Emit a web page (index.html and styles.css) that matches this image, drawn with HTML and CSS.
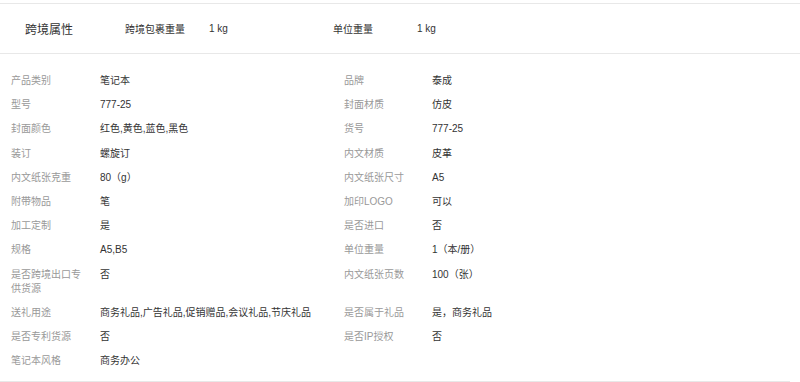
FILE: index.html
```html
<!DOCTYPE html>
<html lang="zh-CN">
<head>
  <meta charset="UTF-8" />
  <meta name="viewport" content="width=device-width, initial-scale=1.0" />
  <title>商品属性</title>
  <link rel="stylesheet" href="styles.css">
</head>
<body>
  <!-- 跨境属性 -->
  <div class="cross-row">
    <div class="cross-title">跨境属性</div>
    <div class="cross-label">跨境包裹重量</div>
    <div class="cross-value">1 kg</div>
    <div class="cross-label">单位重量</div>
    <div class="cross-value">1 kg</div>
  </div>

  <!-- 产品属性 -->
  <div class="attr-grid">
    <div class="attr-name">产品类别</div><div class="attr-value">笔记本</div>
    <div class="attr-name">品牌</div><div class="attr-value">泰成</div>

    <div class="attr-name">型号</div><div class="attr-value">777-25</div>
    <div class="attr-name">封面材质</div><div class="attr-value">仿皮</div>

    <div class="attr-name">封面颜色</div><div class="attr-value">红色,黄色,蓝色,黑色</div>
    <div class="attr-name">货号</div><div class="attr-value">777-25</div>

    <div class="attr-name">装订</div><div class="attr-value">螺旋订</div>
    <div class="attr-name">内文材质</div><div class="attr-value">皮革</div>

    <div class="attr-name">内文纸张克重</div><div class="attr-value">80（g）</div>
    <div class="attr-name">内文纸张尺寸</div><div class="attr-value">A5</div>

    <div class="attr-name">附带物品</div><div class="attr-value">笔</div>
    <div class="attr-name">加印LOGO</div><div class="attr-value">可以</div>

    <div class="attr-name">加工定制</div><div class="attr-value">是</div>
    <div class="attr-name">是否进口</div><div class="attr-value">否</div>

    <div class="attr-name">规格</div><div class="attr-value">A5,B5</div>
    <div class="attr-name">单位重量</div><div class="attr-value">1（本/册）</div>

    <div class="attr-name">是否跨境出口专供货源</div><div class="attr-value">否</div>
    <div class="attr-name">内文纸张页数</div><div class="attr-value">100（张）</div>

    <div class="attr-name">送礼用途</div><div class="attr-value">商务礼品,广告礼品,促销赠品,会议礼品,节庆礼品</div>
    <div class="attr-name">是否属于礼品</div><div class="attr-value">是，商务礼品</div>

    <div class="attr-name">是否专利货源</div><div class="attr-value">否</div>
    <div class="attr-name">是否IP授权</div><div class="attr-value">否</div>

    <div class="attr-name">笔记本风格</div><div class="attr-value">商务办公</div>
  </div>
</body>
</html>
```

FILE: styles.css
```css
body {
  margin: 0;
  font-family: "Liberation Sans", "Noto Sans CJK SC", sans-serif;
  font-size: 10px;
  color: #333;
  background: #fff;
}
.cross-row {
  display: flex;
  align-items: center;
  height: 49px;
  margin-top: 3px;
  border-top: 1px solid #e8e8e8;
  border-bottom: 1px solid #e8e8e8;
}
.cross-title {
  width: 125px;
  padding-left: 25px;
  box-sizing: border-box;
  font-size: 12px;
}
.cross-label {
  width: 84px;
}
.cross-value {
  width: 124px;
}
.attr-grid {
  display: grid;
  grid-template-columns: 89px 244px 88px 1fr;
  padding: 15px 0 7px 11px;
  margin-right: 10px;
  border-bottom: 1px solid #e8e8e8;
  line-height: 14.2px;
}
.attr-name,
.attr-value {
  padding: 5px 0;
}
.attr-name {
  color: #999;
  padding-right: 14px;
}
```
